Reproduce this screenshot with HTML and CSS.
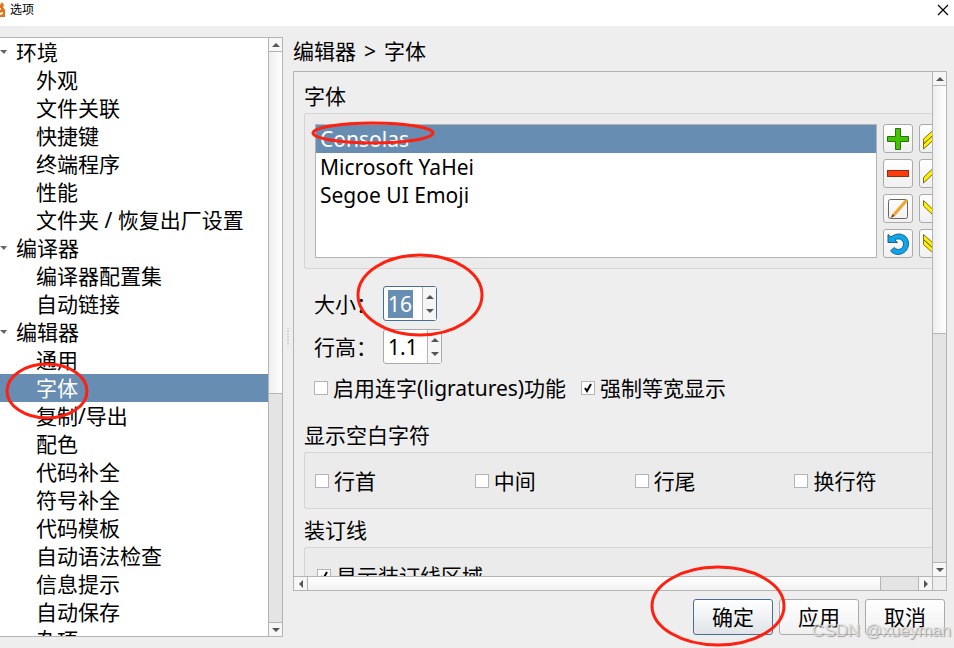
FILE: index.html
```html
<!DOCTYPE html>
<html lang="zh-CN">
<head>
    <meta charset="UTF-8">
    <meta name="viewport" content="width=device-width, initial-scale=1.0">
    <title>选项</title>
    <link rel="stylesheet" href="styles.css">
</head>
<body>
    <header class="titlebar">
        <svg class="app-icon" width="5" height="16" viewBox="0 0 5 16">
            <path d="M0 3 L2 0 L4 3 L3 5 L5 8 V15 H0 Z" fill="#e2731d"/>
            <path d="M0 6 H1 V8 H0 Z M1 10 H3 V12 H2 V13 H0 V11 Z" fill="#fbe3c8"/>
        </svg>
        <h1>选项</h1>
        <button class="close" type="button" aria-label="关闭">
            <svg width="12" height="12" viewBox="0 0 12 12"><path d="M1 1 L11 11 M11 1 L1 11" stroke="#000" stroke-width="1.2"/></svg>
        </button>
    </header>

    <div class="dialog">
        <aside class="sidebar">
            <nav class="tree">
                <ul>
                    <li><a class="parent" href="#env">环境</a>
                        <ul>
                            <li><a href="#appearance">外观</a></li>
                            <li><a href="#assoc">文件关联</a></li>
                            <li><a href="#shortcuts">快捷键</a></li>
                            <li><a href="#terminal">终端程序</a></li>
                            <li><a href="#performance">性能</a></li>
                            <li><a href="#folders">文件夹 / 恢复出厂设置</a></li>
                        </ul>
                    </li>
                    <li><a class="parent" href="#compiler">编译器</a>
                        <ul>
                            <li><a href="#compiler-sets">编译器配置集</a></li>
                            <li><a href="#autolink">自动链接</a></li>
                        </ul>
                    </li>
                    <li><a class="parent" href="#editor">编辑器</a>
                        <ul>
                            <li><a href="#general">通用</a></li>
                            <li><a class="selected" href="#font">字体</a></li>
                            <li><a href="#copy">复制/导出</a></li>
                            <li><a href="#colors">配色</a></li>
                            <li><a href="#completion">代码补全</a></li>
                            <li><a href="#symbols">符号补全</a></li>
                            <li><a href="#templates">代码模板</a></li>
                            <li><a href="#syntax">自动语法检查</a></li>
                            <li><a href="#tooltips">信息提示</a></li>
                            <li><a href="#autosave">自动保存</a></li>
                            <li><a href="#misc">杂项</a></li>
                        </ul>
                    </li>
                </ul>
            </nav>
            <div class="scrollbar vertical">
                <button class="arrow up" type="button" aria-label="向上"></button>
                <div class="track"><div class="thumb tree-thumb"></div></div>
                <button class="arrow down" type="button" aria-label="向下"></button>
            </div>
        </aside>

        <div class="splitter"></div>

        <main class="page">
            <h2 class="breadcrumb"><span>编辑器</span><span>&gt;</span><span>字体</span></h2>

            <div class="scroll-area">
                <div class="viewport">
                    <form class="settings" id="settings">
                        <h3>字体</h3>
                        <div class="group fonts">
                            <ul class="font-list" role="listbox" aria-label="字体">
                                <li class="selected" role="option" aria-selected="true">Consolas</li>
                                <li role="option">Microsoft YaHei</li>
                                <li role="option">Segoe UI Emoji</li>
                            </ul>
                            <div class="tools">
                                <button type="button" aria-label="添加">
                                    <svg width="24" height="24" viewBox="0 0 24 24"><path d="M9.5 1.5 H14.5 V9.5 H22.5 V14.5 H14.5 V22.5 H9.5 V14.5 H1.5 V9.5 H9.5 Z" fill="#43c400" stroke="#2f6b12"/></svg>
                                </button>
                                <button type="button" aria-label="置顶">
                                    <svg width="24" height="24" viewBox="0 0 24 24"><path d="M1.5 12 L12 2.5 L22.5 12 V17 L12 7.5 L1.5 17 Z M1.5 17 L12 7.5 L22.5 17 V22 L12 12.5 L1.5 22 Z" fill="#fff000" stroke="#77701c"/></svg>
                                </button>
                                <button type="button" aria-label="删除">
                                    <svg width="24" height="24" viewBox="0 0 24 24"><rect x="1.5" y="8.5" width="21" height="6" fill="#ff3a0c" stroke="#8c2e18"/></svg>
                                </button>
                                <button type="button" aria-label="上移">
                                    <svg width="24" height="24" viewBox="0 0 24 24"><path d="M1.5 15.5 L12 5.5 L22.5 15.5 V21 L12 11 L1.5 21 Z" fill="#fff000" stroke="#77701c"/></svg>
                                </button>
                                <button type="button" aria-label="编辑">
                                    <svg width="24" height="24" viewBox="0 0 24 24">
                                        <rect x="2.5" y="2.5" width="19" height="19" rx="2" fill="none" stroke="#666"/>
                                        <path d="M6.5 17 L19.500 2 L22 4 L9 19 Z" fill="#f0a732"/>
                                        <path d="M6.5 17 L9 19 L4.5 21 Z" fill="#7a4a18"/>
                                    </svg>
                                </button>
                                <button type="button" aria-label="下移">
                                    <svg width="24" height="24" viewBox="0 0 24 24"><path d="M1.5 3.5 L12 13.5 L22.5 3.5 V9 L12 19 L1.5 9 Z" fill="#fff000" stroke="#77701c"/></svg>
                                </button>
                                <button type="button" aria-label="重置">
                                    <svg width="24" height="24" viewBox="0 0 24 24"><path d="M2 2.5 L5 5 C13 -1.5 22.5 3.5 22.5 11.5 C22.5 21.5 11 26 4.5 19 L8 15.500 C12 19.5 17.5 17 17.5 12 C17.5 7.500 12.5 5.500 9 8 L11.5 10.5 H2 Z" fill="#08a8f0" stroke="#285a78"/></svg>
                                </button>
                                <button type="button" aria-label="置底">
                                    <svg width="24" height="24" viewBox="0 0 24 24"><path d="M1.5 2.5 L12 12 L22.5 2.5 V7.5 L12 17 L1.5 7.5 Z M1.5 7.5 L12 17 L22.5 7.5 V12.5 L12 22 L1.5 12.5 Z" fill="#fff000" stroke="#77701c"/></svg>
                                </button>
                            </div>
                        </div>

                        <div class="fields">
                            <label for="fontSize">大小：</label>
                            <div class="spinbox focused">
                                <input type="text" id="fontSize" value="16">
                                <div class="steps">
                                    <button class="arrow up" type="button" aria-label="增大"></button>
                                    <button class="arrow down" type="button" aria-label="减小"></button>
                                </div>
                            </div>
                            <label for="lineHeight">行高：</label>
                            <div class="spinbox wide">
                                <input type="text" id="lineHeight" value="1.1">
                                <div class="steps">
                                    <button class="arrow up" type="button" aria-label="增大"></button>
                                    <button class="arrow down" type="button" aria-label="减小"></button>
                                </div>
                            </div>
                        </div>

                        <div class="options">
                            <label><input type="checkbox">启用连字(ligratures)功能</label>
                            <label><input type="checkbox" checked>强制等宽显示</label>
                        </div>

                        <h3>显示空白字符</h3>
                        <div class="group whitespace">
                            <label><input type="checkbox">行首</label>
                            <label><input type="checkbox">中间</label>
                            <label><input type="checkbox">行尾</label>
                            <label><input type="checkbox">换行符</label>
                        </div>

                        <h3>装订线</h3>
                        <div class="group gutter">
                            <label><input type="checkbox" checked>显示装订线区域</label>
                        </div>
                    </form>
                </div>
                <div class="scrollbar vertical">
                    <button class="arrow up" type="button" aria-label="向上"></button>
                    <div class="track"><div class="thumb page-thumb"></div></div>
                    <button class="arrow down" type="button" aria-label="向下"></button>
                </div>
                <div class="scrollbar horizontal">
                    <button class="arrow left" type="button" aria-label="向左"></button>
                    <div class="track"><div class="thumb wide-thumb"></div></div>
                    <button class="arrow right" type="button" aria-label="向右"></button>
                </div>
                <div class="corner"></div>
            </div>

            <footer class="actions">
                <button class="primary" type="submit" form="settings">确定</button>
                <button type="button">应用</button>
                <button type="button">取消</button>
            </footer>
        </main>
    </div>

    <svg class="marks">
        <ellipse cx="47" cy="391" rx="40" ry="27"/>
        <ellipse cx="373" cy="133" rx="60" ry="10"/>
        <ellipse cx="420" cy="295" rx="62" ry="40"/>
        <ellipse cx="718" cy="606" rx="66" ry="39"/>
    </svg>
    <p class="watermark">CSDN @xueyman</p>
</body>
</html>
```
FILE: styles.css
```css
* { margin: 0; padding: 0; box-sizing: border-box; }
body { position: relative; display: flex; flex-direction: column; height: 100vh; overflow: hidden; background-color: #eee; color: #000; font: 21px/28px "Noto Sans", "Noto Sans CJK SC", sans-serif; }
button, input { font: inherit; color: inherit; }
ul { list-style: none; }
a { color: inherit; text-decoration: none; }
h2, h3 { font-size: 21px; font-weight: normal; line-height: 28px; }
svg { display: block; }

.titlebar { display: flex; align-items: center; gap: 5px; height: 26px; padding: 0 5px 6px 0; background-color: #fff; }
.titlebar h1 { flex: 1; font-size: 12px; font-weight: normal; line-height: 20px; }
.close { border: none; background: none; }

.dialog { display: flex; flex: 1; min-height: 0; padding: 11px 7px 11px 0; }
.sidebar { display: flex; width: 283px; border: 1px solid #b4b4b4; border-left: none; background-color: #fff; }
.tree { flex: 1; overflow: hidden; white-space: nowrap; }
.tree a { display: block; padding-left: 36px; }
.tree .parent { display: flex; align-items: center; gap: 9px; padding-left: 0; }
.parent::before { content: ""; border: solid transparent; border-width: 4px 3px 0 4px; border-top-color: #666; }
.selected { background-color: #688db2; color: #fff; }
.splitter { align-self: center; width: 10px; height: 18px; background: radial-gradient(circle, #bbb 1px, transparent 1px) center / 10px 3px; }

/* scrollbars */
.scrollbar { display: flex; background-color: #e4e4e4; }
.scrollbar.vertical { flex-direction: column; width: 14px; border-left: 1px solid #b4b4b4; }
.scrollbar.horizontal { height: 14px; border-top: 1px solid #b4b4b4; }
.scrollbar .arrow { flex: none; width: 13px; height: 13px; background-color: #f6f6f6; }
.track { flex: 1; min-width: 0; min-height: 0; }
.vertical .track { border: solid #b4b4b4; border-width: 1px 0; }
.horizontal .track { border: solid #b4b4b4; border-width: 0 1px; }
.vertical .thumb { border-bottom: 1px solid #b4b4b4; background: linear-gradient(to right, #eee, #fff); }
.horizontal .thumb { height: 100%; border-right: 1px solid #b4b4b4; background: linear-gradient(#fff, #f2f2f2); }
.arrow { display: flex; align-items: center; justify-content: center; border: none; background: none; }
.arrow::before { content: ""; border: 4px solid transparent; }
.arrow.up::before { border-top: none; border-bottom-color: #555; }
.arrow.down::before { border-bottom: none; border-top-color: #555; }
.arrow.left::before { border-left: none; border-right-color: #555; }
.arrow.right::before { border-right: none; border-left-color: #555; }
.tree-thumb { height: 60%; }
.page-thumb { height: 52%; }
.wide-thumb { width: 94%; }

.page { display: flex; flex: 1; flex-direction: column; min-width: 0; }
.breadcrumb { display: flex; gap: 8px; margin-bottom: 6px; }
.scroll-area { display: grid; flex: 1; grid-template-columns: 1fr 14px; grid-template-rows: 1fr 14px; min-height: 0; border: 1px solid #b4b4b4; }
.viewport { min-width: 0; overflow: hidden; }
.corner { border: solid #b4b4b4; border-width: 1px 0 0 1px; }
.settings { width: 106%; padding: 10px; white-space: nowrap; }
.settings h3 { margin-bottom: 3px; }
.group { border: 1px solid #d4d4d4; border-radius: 2px; background-color: #ebebeb; }

.fonts { display: flex; gap: 6px; padding: 10px; }
.font-list { flex: 1; border: 1px solid #b4b4b4; background-color: #fff; }
.font-list li { padding-left: 4px; }
.tools { display: grid; grid-template-columns: 30px 30px; gap: 6px; }
.tools button { display: flex; align-items: center; justify-content: center; height: 29px; }
.tools button, .actions button { border: 1px solid #aaa; border-radius: 3px; background: linear-gradient(#fff, #f0f0f0); }

.fields { display: grid; grid-template-columns: 63px 1fr; align-items: center; gap: 8px 6px; padding: 17px 10px 0; }
.spinbox { display: flex; width: 54px; height: 35px; border: 1px solid #aaa; border-radius: 3px; background-color: #fff; }
.spinbox.wide { width: 59px; }
.spinbox input { flex: 1; align-self: center; min-width: 0; height: 28px; margin: 0 9px 0 4px; border: none; outline: none; background: none; }
.spinbox.wide input { margin-right: 0; }
.spinbox.focused { border-color: #4a6f94; }
.spinbox.focused input { background-color: #688db2; color: #fff; }
.steps { display: flex; flex-direction: column; justify-content: center; width: 14px; border-left: 1px solid #b4b4b4; background-color: #f6f6f6; }
.steps .arrow { height: 14px; }

.settings label { display: flex; align-items: center; }
.options { display: flex; gap: 15px; padding: 10px 10px 19px; }
input[type="checkbox"] { appearance: none; width: 14px; height: 14px; margin-right: 5px; border: 1px solid #b4b4b4; background: #fff center no-repeat; }
input[type="checkbox"]:checked { background-image: url("data:image/svg+xml,%3Csvg xmlns='http://www.w3.org/2000/svg' width='12' height='12'%3E%3Cpath d='M3 6 L5 9 L9 2' fill='none' stroke='%23000' stroke-width='2'/%3E%3C/svg%3E"); }
.whitespace { display: grid; grid-template-columns: repeat(4, 1fr); margin-bottom: 7px; padding: 14px 5px 13px 10px; }
.gutter { padding: 14px 12px; }

.actions { display: flex; justify-content: flex-end; gap: 6px; padding: 8px 2px 2px 0; }
.actions button { width: 80px; height: 36px; }
.actions .primary { border-color: #4a6f94; background: linear-gradient(#fff, #e0e4e8); }

/* hand-drawn marks and watermark above the dialog */
.marks { position: absolute; inset: 0; width: 100%; height: 100%; fill: none; stroke: #ff2010; stroke-width: 3; pointer-events: none; }
.watermark { position: absolute; right: 3px; bottom: 4px; color: #ddd; font: 17px/26px "Liberation Sans", sans-serif; text-shadow: 1px 1px 1px #888; opacity: 0.8; pointer-events: none; }
```
